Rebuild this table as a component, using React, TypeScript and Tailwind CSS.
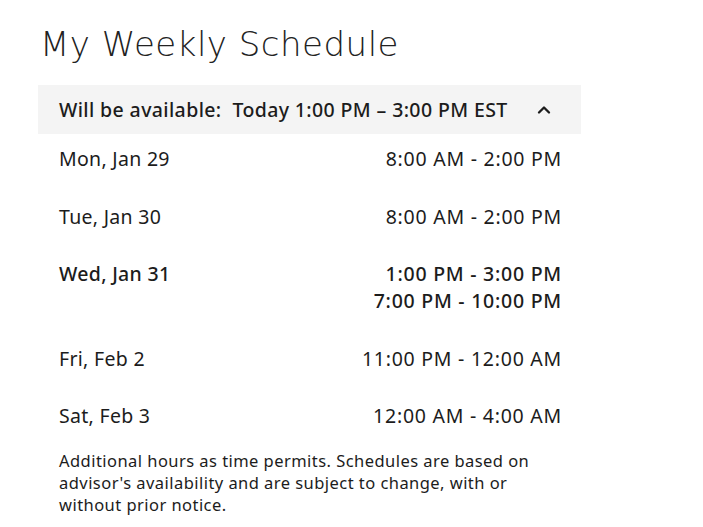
import { ChevronUp } from 'lucide-react';

const rows = [
  { day: 'Mon, Jan 29', times: ['8:00 AM - 2:00 PM'] },
  { day: 'Tue, Jan 30', times: ['8:00 AM - 2:00 PM'] },
  { day: 'Wed, Jan 31', times: ['1:00 PM - 3:00 PM', '7:00 PM - 10:00 PM'], today: true },
  { day: 'Fri, Feb 2', times: ['11:00 PM - 12:00 AM'] },
  { day: 'Sat, Feb 3', times: ['12:00 AM - 4:00 AM'] },
];

const App = () => {
  return (
    <div className="min-h-screen bg-white text-[#1c1c1c] pl-[38px] pt-[22px]">
      <h1 className="font-['DejaVu_Sans',sans-serif] font-extralight text-[34px] leading-[44px] tracking-[0.5px] pl-[2px] text-[#222]">
        My Weekly Schedule
      </h1>

      <div className="w-[543px] mt-[19px] font-['Noto_Sans',sans-serif]">
        {/* Availability bar */}
        <div className="h-[49px] bg-[#f4f4f4] flex items-center justify-between pl-[21px] pr-[27px]">
          <span className="text-[19.5px] font-medium tracking-[0.38px]">
            Will be available:&nbsp; Today 1:00 PM – 3:00 PM EST
          </span>
          <ChevronUp size={20} strokeWidth={2.8} />
        </div>

        {/* Schedule rows */}
        <div className="pl-[21px] pr-[19px]">
          {rows.map((r, i) => (
            <div
              key={r.day}
              className={`flex justify-between ${i === 0 ? 'pt-[11px]' : 'pt-3'} pb-[18.5px] text-[19.5px] leading-[27px] ${r.today ? 'font-medium' : ''}`}
            >
              <span className="tracking-[0.3px]">{r.day}</span>
              <div className="text-right tracking-[0.75px]">
                {r.times.map((t) => (
                  <div key={t}>{t}</div>
                ))}
              </div>
            </div>
          ))}

          <p className="mt-[2px] text-[16.5px] leading-[22px] tracking-[0.45px] w-[500px]">
            Additional hours as time permits. Schedules are based on advisor's availability and are subject to
            change, with or without prior notice.
          </p>
        </div>
      </div>
    </div>
  );
};

export default App;
